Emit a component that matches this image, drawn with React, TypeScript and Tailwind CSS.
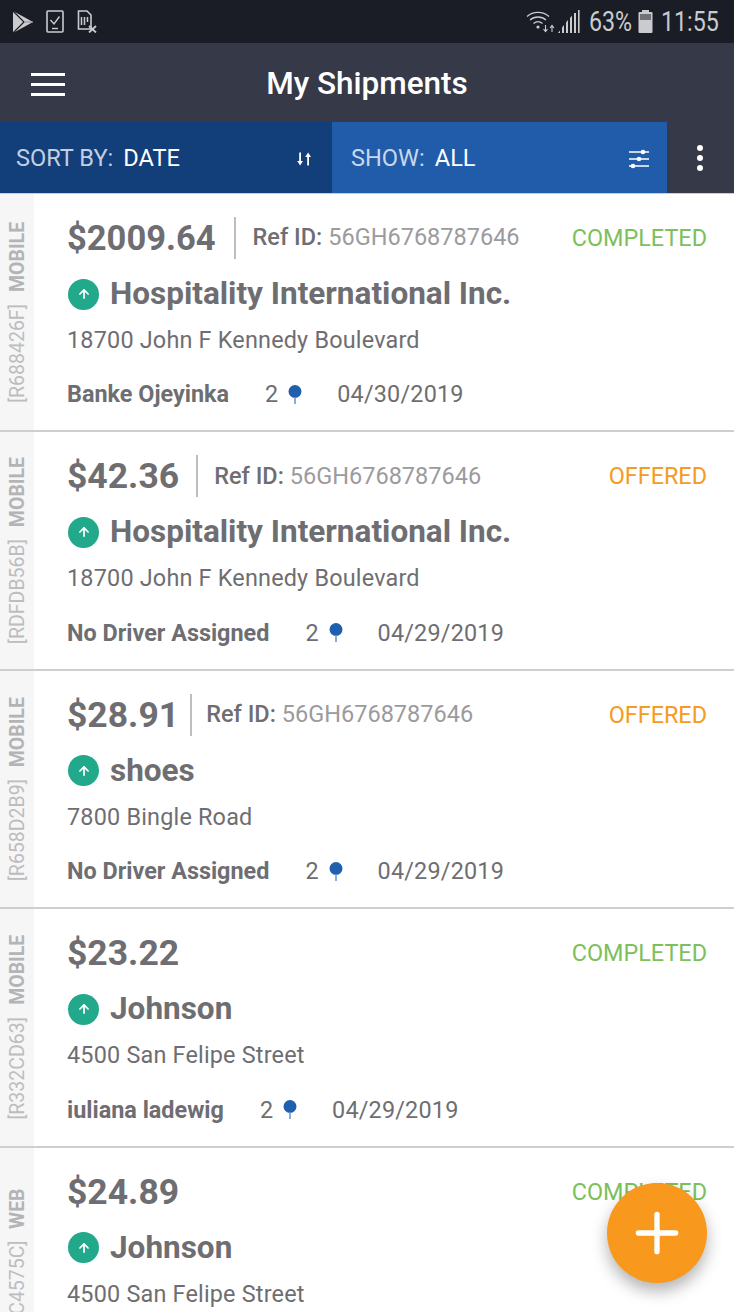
import React from 'react';
import { Plus, ArrowUp } from 'lucide-react';

const PlayIcon = () => (
  <svg width="22" height="24" viewBox="0 0 22 24" fill="none">
    <path d="M1 1 L21 12 L1 23 Z" fill="#c9cbce" />
    <path d="M1 1 L12 12 L1 23" stroke="#1a1d26" strokeWidth="1.2" />
    <path d="M12 12 L21 12" stroke="#8e9094" strokeWidth="1" />
  </svg>
);

const TaskIcon = () => (
  <svg width="18" height="23" viewBox="0 0 18 23" fill="none" stroke="#c9cbce">
    <rect x="1" y="1" width="16" height="21" rx="1" strokeWidth="1.6" />
    <path d="M4.5 10 L8 14 L13.5 6.5" strokeWidth="1.4" />
    <path d="M6 18.5 H12" strokeWidth="1.4" />
  </svg>
);

const SimIcon = () => (
  <svg width="20" height="23" viewBox="0 0 20 23" fill="none">
    <path d="M1.5 1 H10 L14 5 V19 H1.5 Z" stroke="#c9cbce" strokeWidth="1.6" />
    <path d="M4.5 7 V15 M7.5 7 V15 M10.5 7 V12" stroke="#c9cbce" strokeWidth="1.5" />
    <path d="M12 16 L19 22.5 M19 16 L12 22.5" stroke="#c9cbce" strokeWidth="1.8" />
  </svg>
);

const WifiIcon = () => (
  <svg width="29" height="23" viewBox="0 0 29 23" fill="none" stroke="#c9cbce" strokeWidth="1.3">
    <path d="M1 6.5 C7 1 17 1 23 6.5" />
    <path d="M4 10 C8.5 6 15.5 6 20 10" />
    <path d="M7.5 13.5 C10.5 11 13.5 11 16.5 13.5" />
    <circle cx="12" cy="17" r="1.6" fill="#c9cbce" stroke="none" />
    <path d="M19.5 15 V21 M17.5 19 L19.5 21.5 L21.5 19 M26 22 V16 M24 18 L26 15.5 L28 18" strokeWidth="1.1" />
  </svg>
);

const SignalIcon = () => (
  <svg width="22" height="23" viewBox="0 0 22 23" fill="#c9cbce">
    <path d="M0 23 L2 20.5 V23 Z" />
    <path d="M4 23 V17.5 L6 15 V23 Z" />
    <path d="M8 23 V12.5 L10 10 V23 Z" />
    <path d="M12 23 V8 L14 5.5 V23 Z" />
    <rect x="16" y="3" width="2" height="20" />
    <rect x="20" y="0" width="1.6" height="23" />
  </svg>
);

const BatteryIcon = () => (
  <svg width="15" height="23" viewBox="0 0 15 23">
    <rect x="4" y="0" width="7" height="3" fill="#c9cbce" />
    <rect x="0.5" y="2" width="14" height="21" rx="1" fill="#c9cbce" />
    <rect x="2" y="4" width="11" height="6" fill="#6f7277" />
  </svg>
);

const SortIcon = () => (
  <svg width="16" height="16" viewBox="0 0 16 16" fill="white">
    <path d="M3.2 1.5 H5 V10 H7 L4.1 14.5 L1.2 10 H3.2 Z" />
    <path d="M11.2 14.5 H13 V6 H15 L12.1 1.5 L9.2 6 H11.2 Z" />
  </svg>
);

const FilterIcon = () => (
  <svg width="22" height="22" viewBox="0 0 22 22" fill="white" stroke="white">
    <path d="M1 4 H21 M1 11 H21 M1 18 H21" strokeWidth="1.5" />
    <circle cx="15" cy="4" r="2.3" stroke="none" />
    <circle cx="11" cy="11" r="2.3" stroke="none" />
    <circle cx="5" cy="18" r="2.3" stroke="none" />
  </svg>
);

const PinIcon = () => (
  <svg width="14" height="20" viewBox="0 0 14 20" className="block">
    <circle cx="7" cy="6.5" r="6.5" fill="#1f5fae" />
    <rect x="6.2" y="12" width="1.6" height="7" fill="#6d9ad0" />
  </svg>
);

interface ShipmentProps {
  price: string;
  refId?: string;
  tight?: boolean;
  status: string;
  name: string;
  address: string;
  driver: string;
  date: string;
  code: string;
  source: string;
}

const shipments: ShipmentProps[] = [
  { price: '$2009.64', refId: '56GH6768787646', status: 'COMPLETED', name: 'Hospitality International Inc.', address: '18700 John F Kennedy Boulevard', driver: 'Banke Ojeyinka', date: '04/30/2019', code: '[R688426F]', source: 'MOBILE' },
  { price: '$42.36', refId: '56GH6768787646', status: 'OFFERED', name: 'Hospitality International Inc.', address: '18700 John F Kennedy Boulevard', driver: 'No Driver Assigned', date: '04/29/2019', code: '[RDFDB56B]', source: 'MOBILE' },
  { price: '$28.91', refId: '56GH6768787646', tight: true, status: 'OFFERED', name: 'shoes', address: '7800 Bingle Road', driver: 'No Driver Assigned', date: '04/29/2019', code: '[R658D2B9]', source: 'MOBILE' },
  { price: '$23.22', status: 'COMPLETED', name: 'Johnson', address: '4500 San Felipe Street', driver: 'iuliana ladewig', date: '04/29/2019', code: '[R332CD63]', source: 'MOBILE' },
  { price: '$24.89', status: 'COMPLETED', name: 'Johnson', address: '4500 San Felipe Street', driver: 'iuliana ladewig', date: '04/29/2019', code: '[R3C4575C]', source: 'WEB' },
];

const ShipmentRow: React.FC<ShipmentProps> = ({ price, refId, tight, status, name, address, driver, date, code, source }) => {
  const wide = price.length > 7;
  return (
    <div className="flex h-[238.4px] shrink-0 border-b-2 border-[#cfcfcf]">
      <div className="flex w-[34px] shrink-0 items-center justify-center overflow-visible bg-[#f6f6f6]">
        <div className="translate-x-[1px] rotate-180 text-[19.5px] leading-[20px] whitespace-nowrap [writing-mode:vertical-rl]">
          <span className="text-[#bdbdbf]">{code}</span>
          <span className="ml-[-1px] inline-block pt-[12px] font-bold text-[#b4b4b6]">{source}</span>
        </div>
      </div>
      <div className="min-w-0 flex-1 pt-[23px] pr-[27px] pl-[33px] text-[#6e6e72]">
        <div className="flex h-[42px] items-center">
          <span className={`leading-[42px] font-bold ${wide ? 'text-[34.5px]' : 'text-[35.5px]'}`}>{price}</span>
          {refId && (
            <>
              <span className={`h-[42px] w-[2px] bg-[#bdbdbd] ${tight ? 'mr-[14px] ml-[11px]' : wide ? 'mr-[17px] ml-[18px]' : 'mr-[16px] ml-[17px]'}`} />
              <span className="text-[23.5px] font-medium">Ref ID:</span>
              <span className="ml-[6px] text-[23.5px] text-[#9b9b9e]">{refId}</span>
            </>
          )}
          <span className={`ml-auto self-start pt-[3px] text-[23.4px] leading-[36px] ${status === 'OFFERED' ? 'text-[#f59a23]' : 'text-[#7cc05c]'}`}>
            {status}
          </span>
        </div>
        <div className="mt-[13px] ml-[1px] flex h-[44px] items-center">
          <span className="flex h-[31px] w-[31px] items-center justify-center rounded-full bg-[#22a88a]">
            <ArrowUp size={14} color="white" strokeWidth={3} />
          </span>
          <span className="ml-[11px] text-[31.5px] leading-[44px] font-bold">{name}</span>
        </div>
        <div className="mt-[6px] text-[23.4px] leading-[36px] tracking-[0.2px]">{address}</div>
        <div className="mt-[19px] flex h-[36px] items-center text-[23.4px]">
          <span className="font-bold">{driver}</span>
          <span className="ml-[36px]">2</span>
          <span className="ml-[10px]"><PinIcon /></span>
          <span className="ml-[35px] tracking-[0.2px]">{date}</span>
        </div>
      </div>
    </div>
  );
};

const App: React.FC = () => {
  return (
    <div className="relative flex h-[1312px] w-[734px] flex-col overflow-hidden bg-white font-['Roboto',sans-serif]">
      <div className="flex h-[43px] shrink-0 items-center bg-[#1a1d26] pr-[14px] pl-[12px]">
        <PlayIcon />
        <span className="ml-[12px]"><TaskIcon /></span>
        <span className="ml-[13px]"><SimIcon /></span>
        <div className="ml-auto flex items-center text-[#c9cbce]">
          <WifiIcon />
          <span className="ml-[3px]"><SignalIcon /></span>
          <span className="ml-[9px] block w-[42px] origin-left scale-x-[0.86] text-[27px] leading-[30px] whitespace-nowrap">63%</span>
          <span className="ml-[7px]"><BatteryIcon /></span>
          <span className="ml-[8px] block w-[59px] origin-left scale-x-[0.86] text-[27px] leading-[30px] whitespace-nowrap">11:55</span>
        </div>
      </div>

      <div className="grid h-[79px] shrink-0 grid-cols-[1fr_auto_1fr] items-center bg-[#363a48] pt-[3px]">
        <div className="flex flex-col gap-[7px] pl-[31px]">
          <span className="h-[3px] w-[34px] bg-white" />
          <span className="h-[3px] w-[34px] bg-white" />
          <span className="h-[3px] w-[34px] bg-white" />
        </div>
        <span className="text-[31.5px] leading-[40px] font-medium text-white">My Shipments</span>
        <div />
      </div>

      <div className="flex h-[72px] shrink-0 border-b border-[#bcd0e8]">
        <div className="flex w-[332px] items-center justify-between bg-[#123e7a] pt-[3px] pr-[20px] pl-[16px] text-[23.6px] text-white">
          <span><span className="text-[#c2cfe0]">SORT BY:</span><span className="ml-[10px]">DATE</span></span>
          <SortIcon />
        </div>
        <div className="flex w-[335px] items-center justify-between bg-[#215cab] pt-[2px] pr-[17px] pl-[19px] text-[23.6px] text-white">
          <span className="pt-[1px]"><span className="text-[#c8d7ec]">SHOW:</span><span className="ml-[10px]">ALL</span></span>
          <FilterIcon />
        </div>
        <div className="flex flex-1 flex-col items-center justify-center gap-[4px] bg-[#363a48] pr-[2px]">
          <span className="h-[6px] w-[6px] rounded-full bg-white" />
          <span className="h-[6px] w-[6px] rounded-full bg-white" />
          <span className="h-[6px] w-[6px] rounded-full bg-white" />
        </div>
      </div>

      {shipments.map((s, i) => (
        <ShipmentRow key={i} {...s} />
      ))}

      <button className="absolute top-[1183px] left-[607px] flex h-[100px] w-[100px] items-center justify-center rounded-full bg-[#f8981d] shadow-[0_8px_16px_rgba(0,0,0,0.3)]">
        <Plus size={64} color="white" strokeWidth={2} />
      </button>
    </div>
  );
};

export default App;
